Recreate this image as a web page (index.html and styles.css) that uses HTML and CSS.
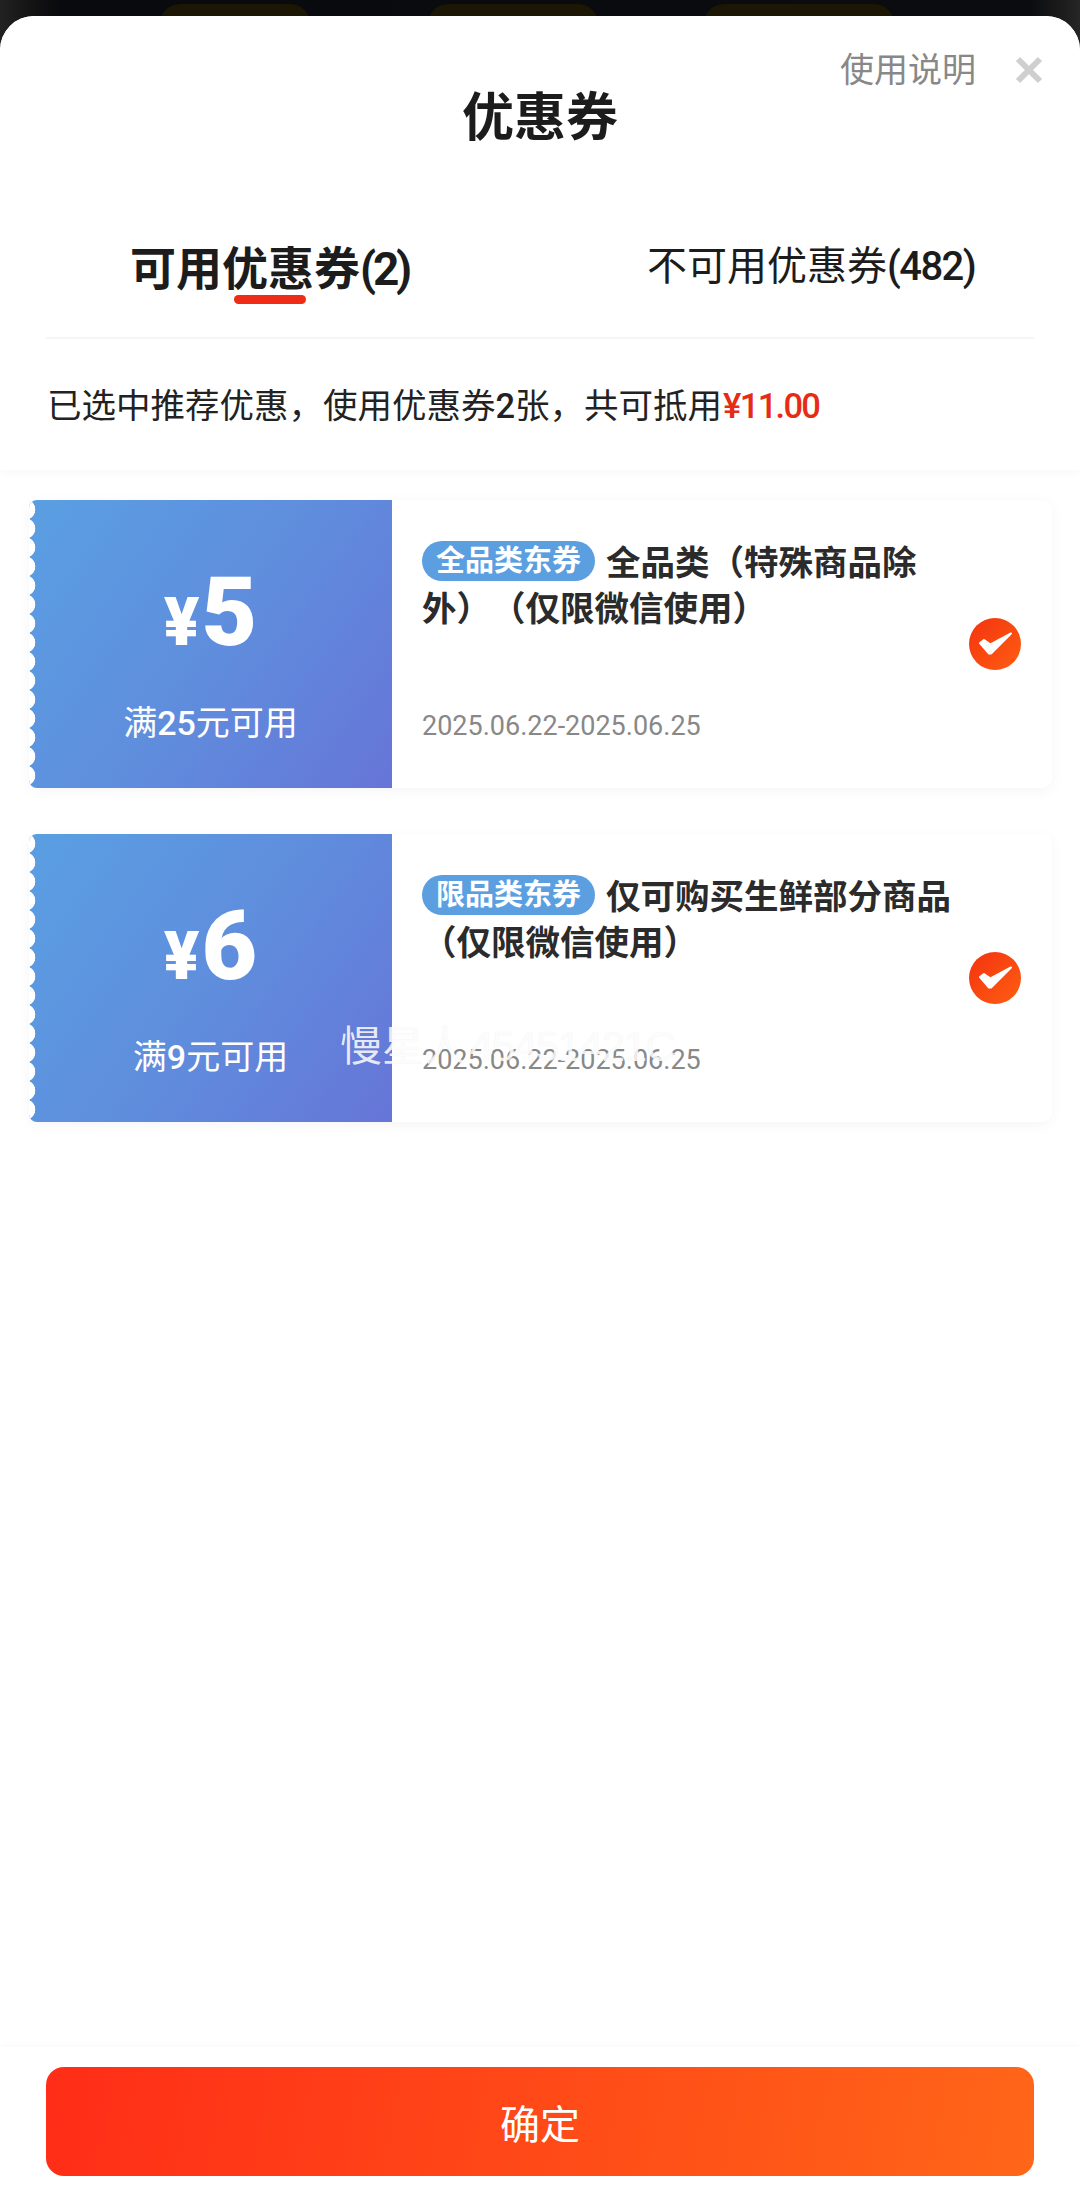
FILE: index.html
```html
<!DOCTYPE html>
<html lang="zh">
<head>
<meta charset="utf-8">
<title>优惠券</title>
<link rel="stylesheet" href="styles.css">
</head>
<body>
<div class="backdrop">
  <span class="pill pill-a"></span>
  <span class="pill pill-b"></span>
  <span class="pill pill-c"></span>
</div>
<main class="sheet">
  <header class="head">
    <h1 class="title">优惠券</h1>
    <div class="head-tools">
      <span class="help">使用说明</span>
      <svg class="close" viewBox="0 0 28 28" aria-hidden="true"><path d="M3 3L25 25M25 3L3 25"/></svg>
    </div>
    <nav class="tabs">
      <div class="tab tab-on">可用优惠券<span class="count-on">(2)</span><i class="tab-bar"></i></div>
      <div class="tab tab-off">不可用优惠券<span class="count-off">(482)</span></div>
    </nav>
    <p class="summary">已选中推荐优惠，使用优惠券<span class="digit">2</span>张，共可抵用<b class="sum-red">¥11.00</b></p>
  </header>
  <section class="list">
    <article class="coupon">
      <div class="face">
        <div class="amount"><span class="yen">¥</span><span class="num">5</span></div>
        <div class="limit">满<span class="digit">25</span>元可用</div>
      </div>
      <div class="info">
        <div class="name"><span class="tag">全品类东券</span>全品类（特殊商品除<br>外）（仅限微信使用）</div>
        <div class="date">2025.06.22-2025.06.25</div>
      </div>
      <span class="check"><svg viewBox="0 0 52 52" aria-hidden="true"><path d="M11 25L15 22L21.5 26.5L42 15.5L22 35.5L20 35.5Z"/></svg></span>
    </article>
    <article class="coupon">
      <div class="face">
        <div class="amount"><span class="yen">¥</span><span class="num">6</span></div>
        <div class="limit">满<span class="digit">9</span>元可用</div>
      </div>
      <div class="info">
        <div class="name"><span class="tag">限品类东券</span>仅可购买生鲜部分商品<br>（仅限微信使用）</div>
        <div class="date">2025.06.22-2025.06.25</div>
      </div>
      <span class="check"><svg viewBox="0 0 52 52" aria-hidden="true"><path d="M11 25L15 22L21.5 26.5L42 15.5L22 35.5L20 35.5Z"/></svg></span>
    </article>
  </section>
  <footer class="foot">
    <button class="confirm" type="button">确定</button>
  </footer>
  <div class="watermark">慢星人<span class="wm-id">45451421C</span></div>
</main>
</body>
</html>
```
FILE: styles.css
```css
* { box-sizing: border-box; }
html, body { margin: 0; padding: 0; }
body {
  width: 1080px;
  height: 2193px;
  overflow: hidden;
  background: linear-gradient(90deg, #222 0, #141414 30px, #090a0d 60px, #0b0c10 1030px, #1b1b1b 1060px, #262626 100%);
  font-family: "Liberation Sans", "Noto Sans CJK SC", sans-serif;
  text-spacing-trim: space-all;
  position: relative;
}
.backdrop { height: 16px; display: flex; gap: 118px; padding-left: 160px; overflow: hidden; }
.pill { width: 150px; height: 40px; margin-top: 4px; border-radius: 26px; background: #1c1604; }
.pill-b { width: 170px; }
.pill-c { width: 190px; margin-left: -12px; }
.sheet {
  position: relative;
  height: 2177px;
  background: #fff;
  border-radius: 34px 34px 0 0;
  display: flex;
  flex-direction: column;
  overflow: hidden;
}
.head {
  position: relative;
  height: 454px;
  flex: none;
  box-shadow: 0 2px 10px rgba(0, 0, 0, .035);
  background: #fff;
  z-index: 1;
}
.title {
  margin: 0;
  padding-top: 72px;
  text-align: center;
  font-size: 52px;
  line-height: 60px;
  font-weight: 700;
  color: #1c1c1c;
}
.head-tools {
  position: absolute;
  top: 34px;
  right: 37px;
  display: flex;
  align-items: center;
  gap: 39px;
}
.help { font-size: 34px; line-height: 40px; color: #888; }
.close { width: 28px; height: 28px; fill: none; stroke: #cfcfcf; stroke-width: 6; }
.tabs {
  margin: 93px 46px 0;
  height: 98px;
  border-bottom: 2px solid #f5f5f5;
  display: flex;
}
.tab { color: #1c1c1c; white-space: nowrap; flex: none; }
.tab-on { position: relative; width: 280px; margin-left: 84px; font-size: 46px; line-height: 56px; font-weight: 700; }
.tab-off { margin-left: 237px; font-size: 40px; line-height: 50px; }
.count-on { font-family: Roboto, sans-serif; font-weight: 700; letter-spacing: -3.2px; }
.count-off { font-family: Roboto, sans-serif; font-weight: 500; letter-spacing: -1.6px; }
.tab-bar {
  position: absolute;
  left: 104px;
  top: 54px;
  width: 72px;
  height: 9px;
  border-radius: 5px;
  background: #ee2c17;
}
.summary {
  margin: 0;
  padding: 45px 0 0 47px;
  font-size: 34.5px;
  line-height: 44px;
  color: #222;
  white-space: nowrap;
}
.digit { font-family: Roboto, sans-serif; font-weight: 500; }
.sum-red {
  margin-left: 1px;
  color: #e62c17;
  font-family: Roboto, sans-serif;
  font-weight: 500;
  letter-spacing: -1.7px;
}
.list {
  flex: 1;
  padding: 30px 28px 0 29px;
  display: flex;
  flex-direction: column;
  gap: 46px;
}
.coupon {
  position: relative;
  height: 288px;
  display: flex;
  background: #fff;
  border-radius: 10px;
  box-shadow: 0 3px 14px rgba(0, 0, 0, .045);
}
.face {
  position: relative;
  width: 363px;
  flex: none;
  border-radius: 8px 0 0 8px;
  background: linear-gradient(125deg, #5a9fe2 0%, #5f8edd 50%, #6675d8 100%);
  color: #fff;
  text-align: center;
  overflow: hidden;
}
.face::before {
  content: "";
  position: absolute;
  left: 0;
  top: 0;
  bottom: 0;
  width: 7px;
  background: radial-gradient(circle at -4px 9.5px, #fff 10px, transparent 10.6px) 0 0 / 7px 19px repeat-y;
}
.amount {
  height: 108px;
  margin-top: 58px;
  display: flex;
  justify-content: center;
  align-items: baseline;
  font-family: Roboto, sans-serif;
  font-weight: 900;
  line-height: 108px;
}
.yen { font-size: 66px; }
.num { font-size: 96px; margin-left: 2px; }
.limit {
  margin-top: 33px;
  font-family: "Noto Sans CJK SC", sans-serif;
  font-size: 34px;
  line-height: 44px;
}
.info { padding: 40px 0 0 30px; position: relative; flex: 1; }
.name {
  font-size: 34.5px;
  line-height: 46px;
  font-weight: 700;
  color: #2b2b2b;
  white-space: nowrap;
}
.tag {
  display: inline-block;
  height: 40px;
  padding: 0 14px;
  margin-right: 11px;
  border-radius: 20px;
  background: #5b9fe0;
  color: #fff;
  font-size: 29px;
  line-height: 40px;
  vertical-align: 4px;
}
.date {
  position: absolute;
  left: 30px;
  top: 208px;
  font-family: Roboto, "Liberation Sans", sans-serif;
  font-size: 27px;
  line-height: 36px;
  color: #888;
  white-space: nowrap;
}
.check {
  position: absolute;
  right: 31px;
  top: 118px;
  width: 52px;
  height: 52px;
  border-radius: 50%;
  background: linear-gradient(135deg, #f3330f, #ff5e12);
}
.check svg { display: block; width: 52px; height: 52px; fill: #fff; stroke: #fff; stroke-width: 2; stroke-linejoin: round; }
.foot {
  flex: none;
  height: 146px;
  padding: 20px 46px 0;
  box-shadow: 0 -2px 8px rgba(0, 0, 0, .025);
}
.confirm {
  display: block;
  width: 100%;
  height: 109px;
  border: 0;
  border-radius: 18px;
  background: linear-gradient(100deg, #ff2d17 0%, #ff6618 100%);
  color: #fff;
  font-family: inherit;
  font-size: 40px;
}
.watermark {
  position: absolute;
  left: 340px;
  top: 1006px;
  font-size: 42px;
  line-height: 50px;
  color: rgba(255, 255, 255, .85);
  text-shadow: 0 0 1px rgba(0, 0, 0, .08);
  white-space: nowrap;
  z-index: 2;
}
.wm-id { margin-left: 4px; letter-spacing: -1.4px; }
```
